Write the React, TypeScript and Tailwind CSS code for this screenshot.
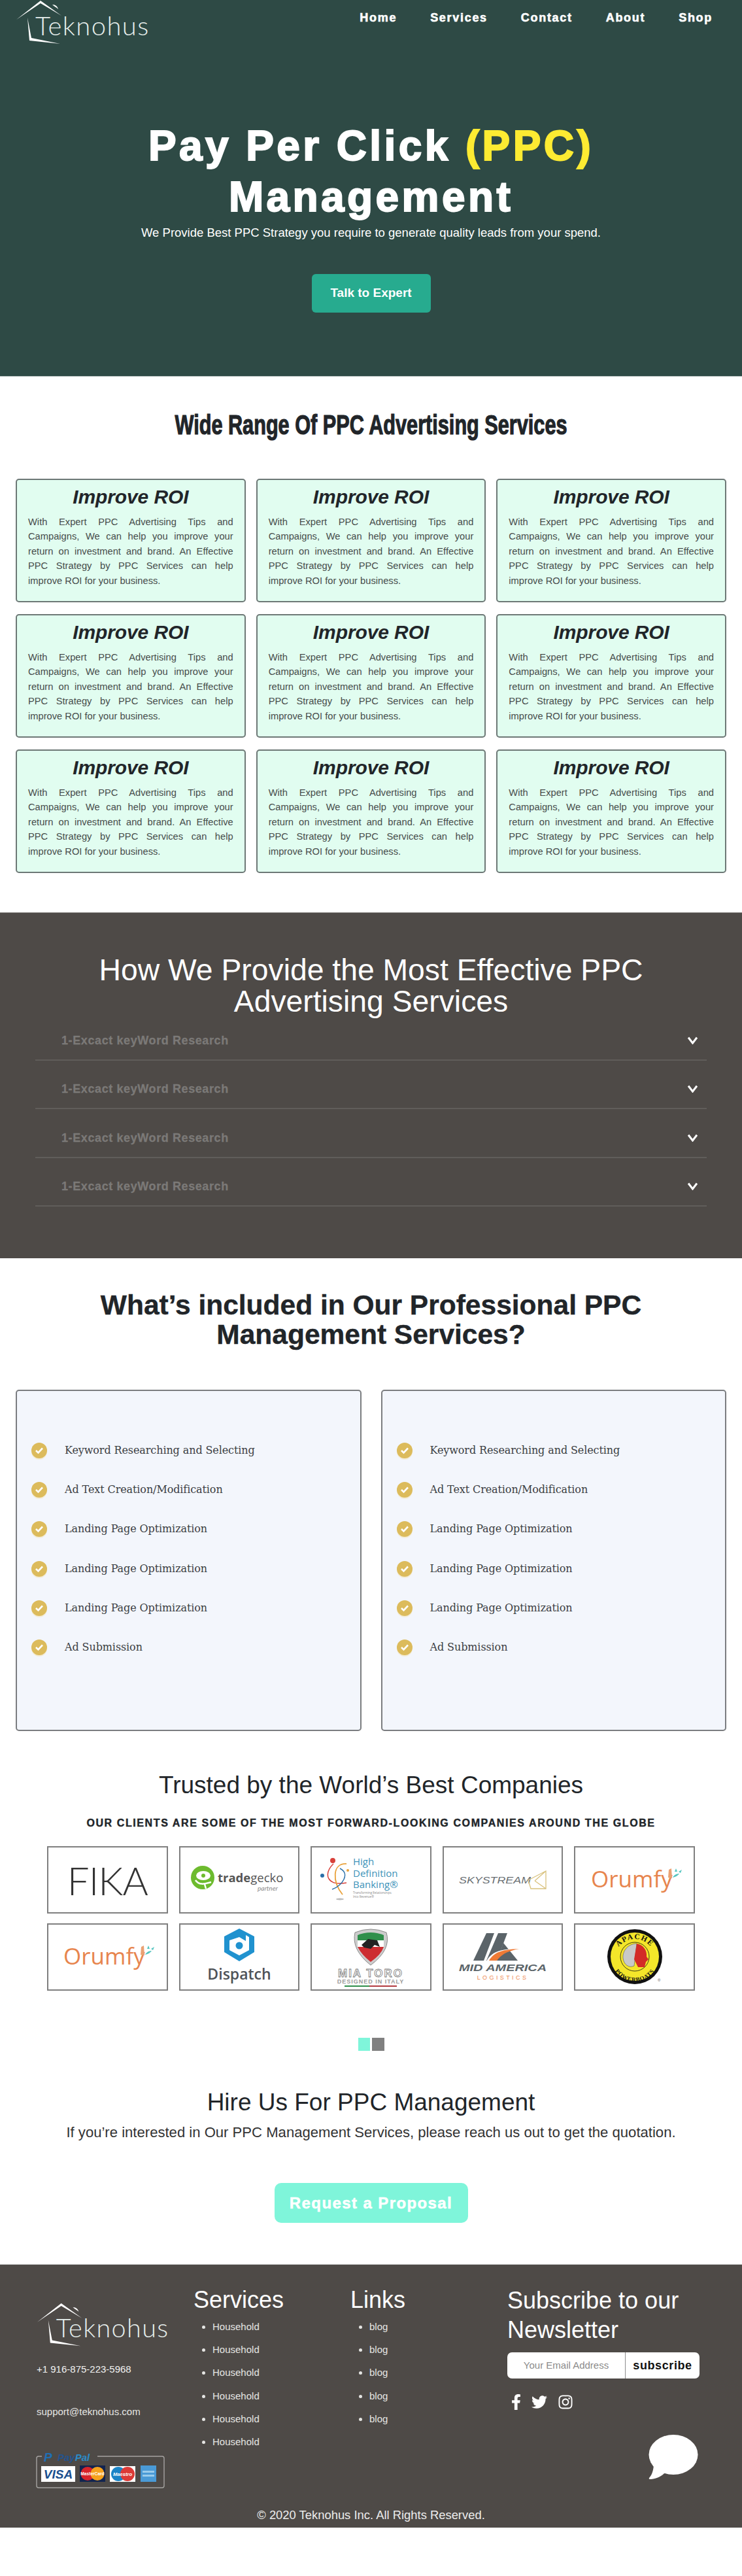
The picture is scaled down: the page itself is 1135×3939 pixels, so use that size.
import { FaFacebookF, FaInstagram, FaTwitter } from "react-icons/fa";

const arial = "font-['Liberation_Sans',Arial,sans-serif]";

function TeknohusLogo({ className }: { className: string }) {
  return (
    <svg viewBox="0 0 210 70" className={className}>
      <path d="M1 30 L38 1 L70 24 L38 5 Z" fill="#fff" />
      <path d="M56 7 C61 7 64 10 65 14 C62 11 59 10 56 7 Z" fill="#fff" />
      <path d="M18 27 L24 58 L68 67 L21 62 Z" fill="#fff" />
      <text x="30" y="54" fontFamily="Lato, sans-serif" fontWeight="300" fontSize="40" fill="#e6eeec" letterSpacing="1.4">
        Teknohus
      </text>
    </svg>
  );
}

function ImproveCard() {
  return (
    <div className="h-[189px] rounded-[5px] border-2 border-[#6d7876] bg-[#e1fdf0] px-[17px] pt-[4px]">
      <h3 className="text-center text-[30px] leading-[44px] font-bold italic tracking-[-0.1px] text-[#212529]">Improve ROI</h3>
      <p className="mt-[5px] text-justify text-[14.7px] leading-[22.4px] text-[#474c4b]">
        With Expert PPC Advertising Tips and Campaigns, We can help you improve your return on investment and brand. An Effective PPC Strategy by PPC Services can help improve ROI for your business.
      </p>
    </div>
  );
}

function AccordionRow() {
  return (
    <div className="mx-[54px] flex h-[74.6px] items-end justify-between border-b-2 border-[#605d5a] pr-[13px] pb-[19px] pl-[40px]">
      <span className="text-[18px] leading-[20px] font-bold tracking-[0.6px] text-[#7b7977] [-webkit-text-stroke:0.3px_#7b7977]">1-Excact keyWord Research</span>
      <svg width="17" height="12" viewBox="0 0 17 12" fill="none" stroke="#fff" strokeWidth="3" className="mb-[4px]">
        <path d="M2 1.5 L8.5 10 L15 1.5" />
      </svg>
    </div>
  );
}

function CheckList() {
  const items = ["Keyword Researching and Selecting", "Ad Text Creation/Modification", "Landing Page Optimization", "Landing Page Optimization", "Landing Page Optimization", "Ad Submission"];
  return (
    <div className="h-[522px] rounded-[5px] border-2 border-[#7b7d80] bg-[#f3f6fc] pt-[61px] pl-[22px]">
      {items.map((item, i) => (
        <div key={i} className="flex h-[60.2px] items-center gap-[27px]">
          <span className="flex size-[24px] items-center justify-center rounded-full bg-[#dcbb5c] shadow-[0_2px_0_#f3ecd7]">
            <svg width="14" height="12" viewBox="0 0 14 12" fill="none" stroke="#fff" strokeWidth="2.6">
              <path d="M2 6 L5.5 9.5 L12 2.5" />
            </svg>
          </span>
          <span className="font-['DejaVu_Serif',Georgia,serif] text-[16px] tracking-[-0.1px] text-[#3c4043]">{item}</span>
        </div>
      ))}
    </div>
  );
}

function LogoBox({ children }: { children: React.ReactNode }) {
  return <div className="flex h-[103px] items-center justify-center border-2 border-[#7f7f7f] bg-white">{children}</div>;
}

function Orumfy() {
  return (
    <svg viewBox="0 0 150 50" className="w-[150px]">
      <text x="8" y="36" fontFamily="'Open Sans', sans-serif" fontSize="35" fill="#e7854e">Orumfy</text>
      <path d="M126 21 L127 9 L131 7 L132 22 Z" fill="#eaa173" />
      <path d="M133 21 C138 20 141 18 143 15 C139 15 135 17 133 21 Z M136 12 L138 7 L140 12 Z M142 12 L147 9 L145 14 Z" fill="#56c5c0" />
    </svg>
  );
}

function Logos() {
  return (
    <div className="mx-[72px] grid grid-cols-5 gap-x-[17px] gap-y-[15px]">
      <LogoBox>
        <span className="font-['Lato',sans-serif] text-[60px] leading-none font-light tracking-[-1px] text-[#333]">FIKA</span>
      </LogoBox>
      <LogoBox>
        <svg viewBox="0 0 150 50" className="w-[150px]">
          <circle cx="19" cy="21" r="18" fill="#6dbb2e" />
          <ellipse cx="20" cy="18" rx="11" ry="7" fill="#fff" />
          <circle cx="20" cy="18" r="3" fill="#6dbb2e" />
          <path d="M8 25 C14 34 24 30 32 28 M22 31 L24 38" stroke="#fff" strokeWidth="2.5" fill="none" />
          <text x="42" y="28" fontFamily="'Open Sans', sans-serif" fontSize="18.5" fill="#555">
            <tspan fontWeight="700">trade</tspan>gecko
          </text>
          <text x="103" y="41" fontFamily="Lato, sans-serif" fontStyle="italic" fontSize="10" fill="#888">partner</text>
        </svg>
      </LogoBox>
      <LogoBox>
        <svg viewBox="0 0 170 80" className="w-[170px]">
          <circle cx="27" cy="10" r="4" fill="#d8413a" />
          <circle cx="11" cy="33" r="3" fill="#2a6fa8" />
          <circle cx="50" cy="25" r="2" fill="#e9a23b" />
          <path d="M28 15 C12 30 18 50 48 44" stroke="#d8413a" strokeWidth="1.5" fill="none" />
          <path d="M48 15 C26 14 26 42 42 62" stroke="#e9a23b" strokeWidth="1.8" fill="none" />
          <path d="M38 22 C54 30 42 48 26 54" stroke="#2a6fa8" strokeWidth="1.5" fill="none" />
          <ellipse cx="38" cy="69" rx="6" ry="1.5" fill="#bbb" />
          <text fontFamily="'Open Sans', sans-serif" fontSize="15" fill="#3d93b9">
            <tspan x="58" y="17">High</tspan>
            <tspan x="58" y="35">Definition</tspan>
            <tspan x="58" y="52">Banking®</tspan>
          </text>
          <text fontFamily="'Open Sans', sans-serif" fontSize="4.6" fill="#888">
            <tspan x="58" y="61">Transforming Relationships</tspan>
            <tspan x="58" y="67">Into Revenue®</tspan>
          </text>
        </svg>
      </LogoBox>
      <LogoBox>
        <svg viewBox="0 0 150 40" className="w-[150px]">
          <text x="8" y="25" fontFamily="'Liberation Sans', sans-serif" fontStyle="italic" fontSize="15" fill="#6a7074" textLength="110" lengthAdjust="spacingAndGlyphs">SKYSTREAM</text>
          <path d="M114 20 L141 6 L141 33 L118 33 Z M124 21 L141 6 M124 21 L141 33" stroke="#d9c27e" strokeWidth="1.3" fill="none" />
        </svg>
      </LogoBox>
      <LogoBox>
        <Orumfy />
      </LogoBox>
      <LogoBox>
        <Orumfy />
      </LogoBox>
      <LogoBox>
        <svg viewBox="0 0 120 92" className="w-[120px]">
          <path d="M60 2 L83 14 L83 38 L60 52 L37 38 L37 14 Z" fill="#2092cf" />
          <path d="M60 15 L70 21 L70 12 L75 15 L75 35 L60 43 L45 35 L45 20 Z" fill="#fff" />
          <circle cx="60" cy="28" r="5.5" fill="#2092cf" />
          <text x="60" y="80" textAnchor="middle" fontFamily="'Open Sans', sans-serif" fontWeight="600" fontSize="23" fill="#4f5358">Dispatch</text>
        </svg>
      </LogoBox>
      <LogoBox>
        <svg viewBox="0 0 120 92" className="w-[120px]">
          <path d="M36 8 Q60 -2 84 8 Q92 34 60 58 Q30 34 36 8 Z" fill="#ccc" stroke="#8a8a8a" />
          <path d="M40 12 Q60 4 80 12 L80 20 L40 20 Z" fill="#2f8f4b" />
          <path d="M40 30 L80 30 Q76 42 60 53 Q46 42 40 30 Z" fill="#cd2d31" />
          <path d="M40 20 L80 20 L80 30 L40 30 Z" fill="#fff" />
          <path d="M46 27 L56 18 L70 20 L74 30 L66 27 L60 33 L50 31 Z" fill="#222" />
          <text x="60" y="76" textAnchor="middle" fontFamily="'Liberation Sans', sans-serif" fontWeight="700" fontSize="17" letterSpacing="2" fill="#fff" stroke="#777" strokeWidth="0.8">MIA TORO</text>
          <text x="60" y="86" textAnchor="middle" fontFamily="'Liberation Sans', sans-serif" fontWeight="700" fontSize="9" letterSpacing="1" fill="#999">DESIGNED IN ITALY</text>
          <rect x="20" y="89" width="38" height="2" fill="#2f8f4b" />
          <rect x="58" y="89" width="42" height="2" fill="#b23b40" />
        </svg>
      </LogoBox>
      <LogoBox>
        <svg viewBox="0 0 150 78" className="w-[150px]">
          <path d="M30 44 L46 44 L62 2 L50 2 Z M50 44 L66 44 L82 2 L68 2 Z" fill="#5b6469" />
          <path d="M76 17 L98 44 L66 44 Z" fill="#5b6469" />
          <path d="M50 45 C58 30 72 26 100 26 C84 28 72 33 63 45 Z" fill="#fff" />
          <path d="M54 44 C62 31 74 27 100 26 C84 29 73 34 66 44 Z" fill="#ee7a35" />
          <text x="8" y="60" fontFamily="'Liberation Sans', sans-serif" fontWeight="700" fontStyle="italic" fontSize="15" fill="#5b6469" textLength="134" lengthAdjust="spacingAndGlyphs">MID AMERICA</text>
          <text x="75" y="73" textAnchor="middle" fontFamily="'Liberation Sans', sans-serif" fontSize="9" letterSpacing="3.4" fill="#ee8b55">LOGISTICS</text>
        </svg>
      </LogoBox>
      <LogoBox>
        <svg viewBox="0 0 90 90" className="w-[90px]">
          <defs>
            <path id="apacheTop" d="M14 48 A31 31 0 0 1 76 48" />
            <path id="apacheBottom" d="M9 46 A36 36 0 0 0 81 46" />
          </defs>
          <circle cx="45" cy="44" r="42" fill="#111" />
          <circle cx="45" cy="44" r="37" fill="#f4e62a" />
          <circle cx="45" cy="44" r="22" fill="#f4e62a" stroke="#111" strokeWidth="0.8" />
          <text fontFamily="'Liberation Serif', serif" fontWeight="700" fontSize="11.5" letterSpacing="1.5" fill="#111">
            <textPath href="#apacheTop" startOffset="50%" textAnchor="middle">APACHE</textPath>
          </text>
          <text fontFamily="'Liberation Serif', serif" fontWeight="700" fontSize="9" letterSpacing="0.7" fill="#111">
            <textPath href="#apacheBottom" startOffset="50%" textAnchor="middle">POWERBOATS</textPath>
          </text>
          <path d="M27 46 C26 34 36 24 48 24 L44 58 C36 62 28 56 27 46 Z" fill="#c9c9c9" stroke="#555" strokeWidth="0.6" />
          <path d="M48 24 C58 26 64 34 63 44 L66 48 L62 52 L60 60 L50 60 L44 48 Z" fill="#d32b27" />
          <text x="80" y="82" fontFamily="'Liberation Sans', sans-serif" fontSize="6" fill="#555">®</text>
        </svg>
      </LogoBox>
    </div>
  );
}

function PayBadge() {
  return (
    <svg viewBox="0 0 197 60" className="mt-[49px] ml-[-1px] w-[197px]">
      <path d="M9 9 L4 9 Q1 9 1 12 L1 54 Q1 57 4 57 L193 57 Q196 57 196 54 L196 12 Q196 9 193 9 L94 9" fill="none" stroke="#a5a3a1" strokeWidth="1.4" />
      <text x="12" y="17" fontFamily="'Liberation Sans', sans-serif" fontWeight="700" fontStyle="italic" fontSize="19" fill="#1f6fb5">P</text>
      <text x="33" y="16" fontFamily="'Liberation Sans', sans-serif" fontWeight="700" fontStyle="italic" fontSize="15" fill="#23538f">Pay<tspan fill="#2a8bc9">Pal</tspan></text>
      <rect x="8" y="24" width="52" height="24" fill="#fff" />
      <text x="34" y="43" textAnchor="middle" fontFamily="'Liberation Sans', sans-serif" fontWeight="700" fontStyle="italic" fontSize="19" fill="#1b4f8f">VISA</text>
      <rect x="67" y="23" width="39" height="25" fill="#12244f" />
      <circle cx="79" cy="35.5" r="10.5" fill="#d8232a" />
      <circle cx="94" cy="35.5" r="10.5" fill="#f6a21c" />
      <text x="86.5" y="38" textAnchor="middle" fontFamily="'Liberation Sans', sans-serif" fontWeight="700" fontSize="6.6" fill="#fff">MasterCard</text>
      <rect x="113" y="24" width="39" height="24" fill="#fff" />
      <circle cx="126" cy="36" r="11" fill="#1a84c6" />
      <circle cx="140" cy="36" r="11" fill="#dc3a37" />
      <text x="132.5" y="38.5" textAnchor="middle" fontFamily="'Liberation Sans', sans-serif" fontWeight="700" fontStyle="italic" fontSize="7.6" fill="#fff">Maestro</text>
      <rect x="160" y="23" width="24" height="25" fill="#4a9ad6" />
      <rect x="163" y="31" width="18" height="3" fill="#9accec" />
      <rect x="163" y="37" width="18" height="3" fill="#9accec" />
    </svg>
  );
}

function FooterList({ items }: { items: string[] }) {
  return (
    <ul className="mt-[1px] ml-[29px] list-disc text-[15px] leading-[35.2px] text-[#e5e5e3]">
      {items.map((item, i) => (
        <li key={i}>{item}</li>
      ))}
    </ul>
  );
}

export default function App() {
  return (
    <div className={`${arial} min-h-[3939px] bg-white text-[#212529]`}>
      <header className="h-[576px] border-b border-[#b9c2c0] bg-[#2e4a45] text-center text-white">
        <div className="flex items-start justify-between pr-[45px] pl-[24px]">
          <TeknohusLogo className="w-[210px]" />
          <nav className="mt-[17px] flex gap-[51px] text-[18px] leading-[20px] font-bold tracking-[1.7px] [-webkit-text-stroke:0.6px_#fff]">
            <span>Home</span>
            <span>Services</span>
            <span>Contact</span>
            <span>About</span>
            <span>Shop</span>
          </nav>
        </div>
        <h1 className="mx-auto mt-[114px] w-[800px] text-[64px] leading-[78px] font-bold tracking-[4.4px] [-webkit-text-stroke:2px_#fff]">
          Pay Per Click <span className="text-[#fdeb32] [-webkit-text-stroke:2px_#fdeb32]">(PPC)</span> Management
        </h1>
        <p className="mt-[1px] text-[18.5px] leading-[30px]">We Provide Best PPC Strategy you require to generate quality leads from your spend.</p>
        <button className="mt-[48px] h-[59px] w-[182px] rounded-[6px] bg-[#27ab8f] text-[19px] font-bold text-white">Talk to Expert</button>
      </header>

      <section className="px-6 pt-[49px] pb-[60px]">
        <h2 className="scale-x-[0.73] text-center text-[42px] leading-[50px] font-bold [-webkit-text-stroke:1.2px_#212529]">
          Wide Range Of PPC Advertising Services
        </h2>
        <div className="mt-[57px] grid grid-cols-3 gap-x-4 gap-y-[18px]">
          {Array.from({ length: 9 }).map((_, i) => (
            <ImproveCard key={i} />
          ))}
        </div>
      </section>

      <section className="h-[529px] border-t border-[#8d8b89] bg-[#4e4a47] pt-[63px]">
        <h2 className="mx-auto w-[900px] text-center text-[46.3px] leading-[48px] text-white">How We Provide the Most Effective PPC Advertising Services</h2>
        <div className="mt-[-8px]">
          {Array.from({ length: 4 }).map((_, i) => (
            <AccordionRow key={i} />
          ))}
        </div>
      </section>

      <section className="px-6 pt-[49px]">
        <h2 className="mx-auto w-[880px] text-center text-[42.5px] leading-[45px] font-bold [-webkit-text-stroke:0.4px_#212529]">What’s included in Our Professional PPC Management Services?</h2>
        <div className="mt-[62px] grid grid-cols-2 gap-x-[30px]">
          <CheckList />
          <CheckList />
        </div>
      </section>

      <section className="pt-[59px] text-center">
        <h2 className="text-[37px] leading-[48px]">Trusted by the World’s Best Companies</h2>
        <p className="mt-[24px] text-[16px] leading-[20px] font-bold tracking-[1.6px] [-webkit-text-stroke:0.4px_#212529]">OUR CLIENTS ARE SOME OF THE MOST FORWARD-LOOKING COMPANIES AROUND THE GLOBE</p>
        <div className="mt-[25px]">
          <Logos />
        </div>
        <div className="mt-[72px] flex justify-center gap-[3px]">
          <span className="h-[20px] w-[18px] bg-[#7ff5da]" />
          <span className="h-[20px] w-[19px] bg-[#808080]" />
        </div>
        <h2 className="mt-[57px] text-[37px] leading-[44px]">Hire Us For PPC Management</h2>
        <p className="mt-[9px] text-[22.1px] leading-[30px] text-[#333]">If you’re interested in Our PPC Management Services, please reach us out to get the quotation.</p>
        <button className="mt-[62px] h-[61px] w-[296px] rounded-[10px] bg-[#7ff5da] text-[24px] font-bold tracking-[1.4px] text-white [-webkit-text-stroke:0.5px_#fff]">Request a Proposal</button>
      </section>

      <footer className="relative mt-[63px] h-[403px] border-t border-[#cfcfcf] bg-[#4e4a47] pt-[32px] text-white">
        <div className="grid grid-cols-[240px_240px_240px_1fr] pl-[56px]">
          <div>
            <TeknohusLogo className="mt-[26px] w-[208px]" />
            <p className="mt-[23px] text-[15px] leading-[20px] text-[#f0f0f0]">+1 916-875-223-5968</p>
            <p className="mt-[45px] text-[15px] leading-[20px] text-[#e5e5e3]">support@teknohus.com</p>
            <PayBadge />
          </div>
          <div>
            <h3 className="text-[36px] leading-[44px]">Services</h3>
            <FooterList items={["Household", "Household", "Household", "Household", "Household", "Household"]} />
          </div>
          <div>
            <h3 className="text-[36px] leading-[44px]">Links</h3>
            <FooterList items={["blog", "blog", "blog", "blog", "blog"]} />
          </div>
          <div>
            <h3 className="w-[290px] text-[36px] leading-[45px]">Subscribe to our Newsletter</h3>
            <div className="mt-[12px] flex h-[40px] w-[294px] overflow-hidden rounded-[7px] bg-white text-center">
              <input placeholder="Your Email Address" className="w-[181px] border-r border-[#8e8e8e] px-[20px] text-center text-[15px] text-black placeholder:text-[#8b8b8b]" />
              <button className="flex-1 text-[18px] font-bold tracking-[0.6px] text-[#111]">subscribe</button>
            </div>
            <div className="mt-[24px] flex items-center gap-[16px] pl-[6px] text-[24px]">
              <FaFacebookF className="w-[15px]" />
              <FaTwitter />
              <FaInstagram />
            </div>
          </div>
        </div>
        <svg viewBox="0 0 76 68" className="absolute top-[260px] left-[992px] w-[76px]">
          <ellipse cx="38" cy="30.5" rx="37.5" ry="30.5" fill="#fff" />
          <path d="M8 44 C8 54 5 62 1 66 C0 68 2 68 4 68 C13 67 21 63 25 58 Z" fill="#fff" />
        </svg>
        <p className="absolute right-0 bottom-[8px] left-0 text-center text-[18.4px] leading-[22px] text-[#ececec]">© 2020 Teknohus Inc. All Rights Reserved.</p>
      </footer>
    </div>
  );
}
